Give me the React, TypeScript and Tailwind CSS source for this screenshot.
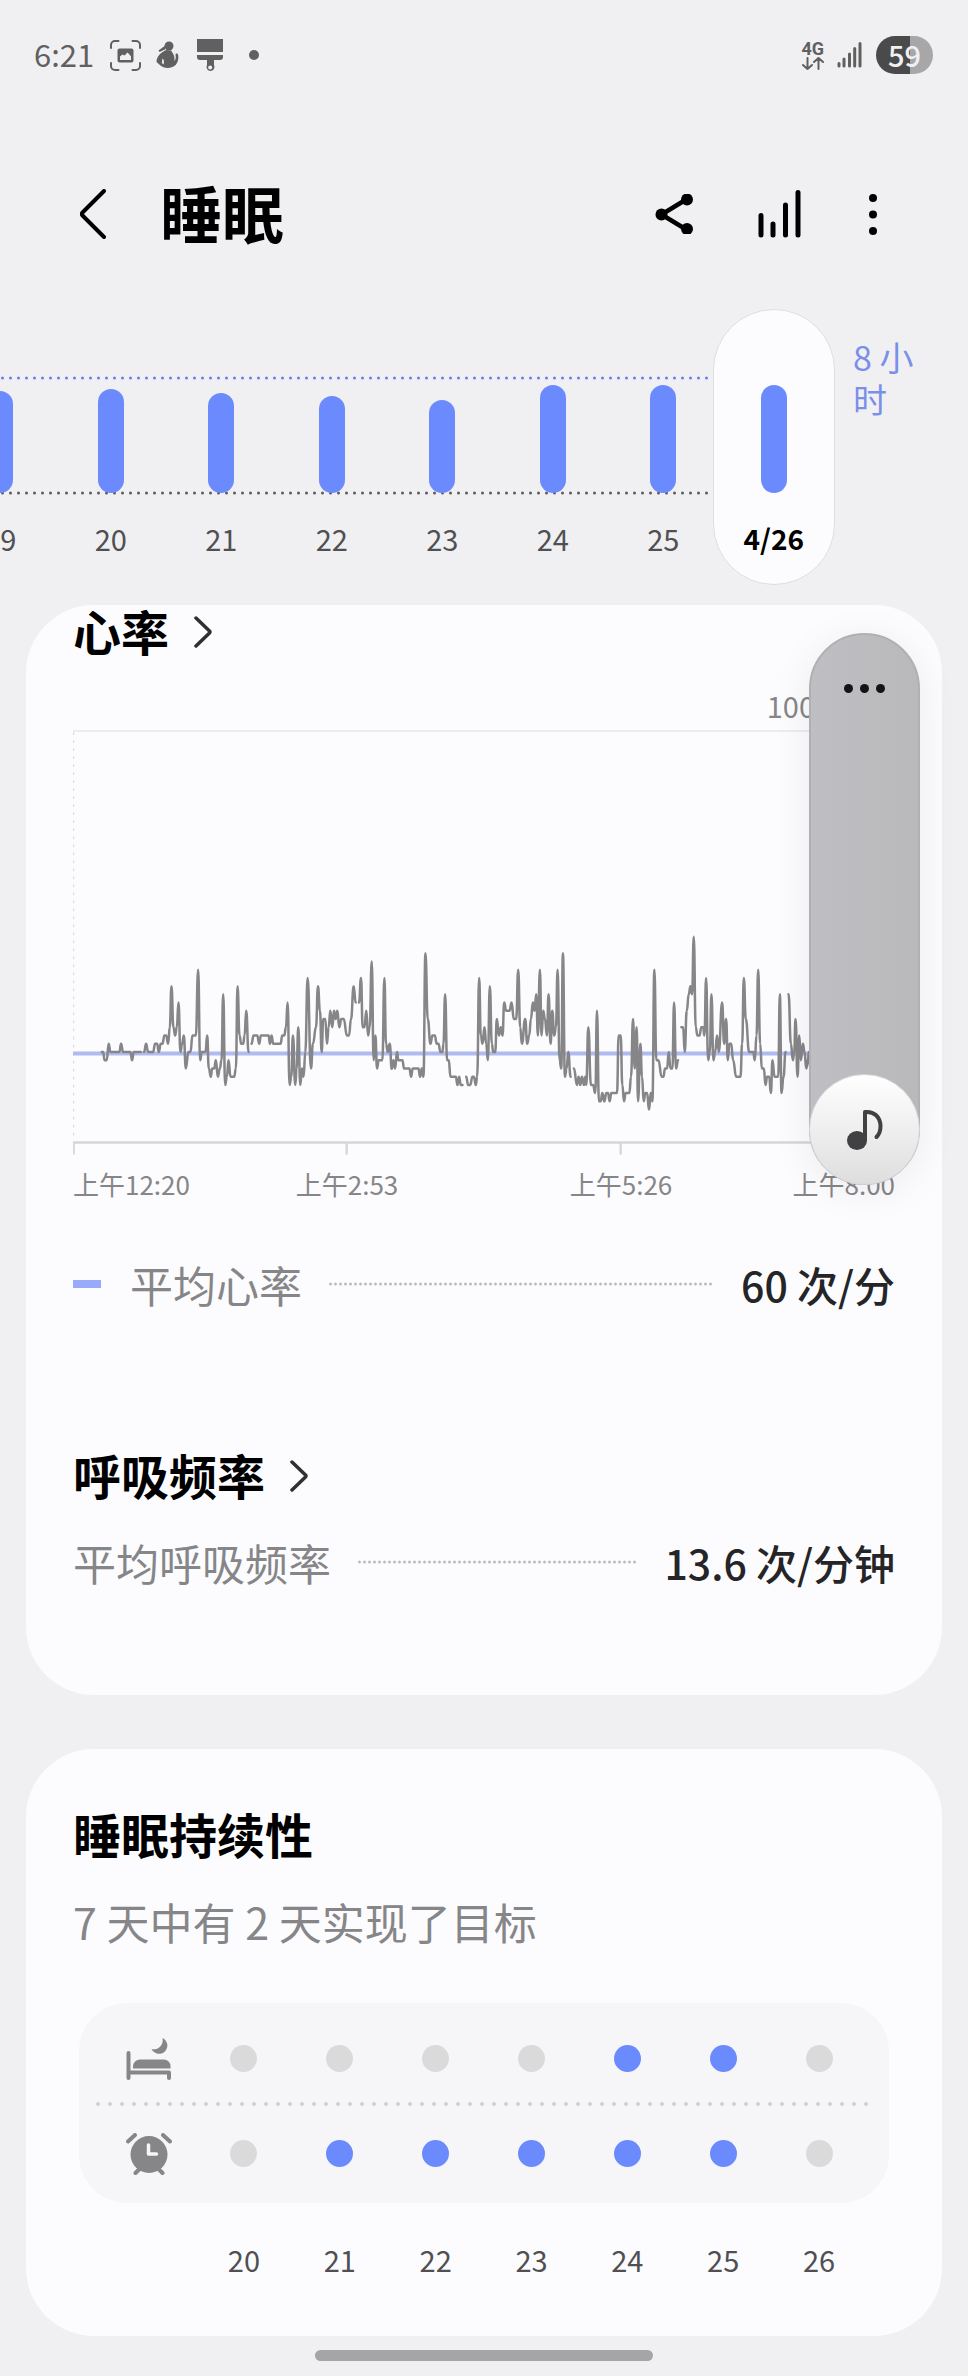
import type { ReactNode } from 'react';

type Sample = [number, number];

// Each run is a stretch of the night with continuous readings: [x, bpm]
// x is in chart units (2463 across the whole night), counted from `at`
const heartRuns: { at: number; samples: Sample[] }[] = [
  {
    at: -39,
    samples: [[125, 61], [129, 61], [134, 60], [140, 60], [146, 62], [151, 61], [178, 61], [183, 62], [189, 61], [211, 61], [216, 60], [221, 61], [242, 61]],
  },
  {
    at: -39,
    samples: [
      [252, 61], [258, 62], [264, 61], [279, 61], [285, 62], [291, 62], [296, 61], [302, 62], [307, 62], [313, 63], [318, 63], [324, 62], [329, 64], [334, 69], [340, 64], [345, 63], [350, 64], [355, 67], [361, 61], [366, 62], [371, 63], [377, 59], [385, 61], [391, 61], [397, 63], [407, 63], [414, 71], [420, 60], [425, 61], [436, 61], [441, 63], [446, 59], [452, 58], [456, 59], [462, 59], [467, 60], [473, 58], [479, 59], [484, 60], [489, 68], [495, 57], [500, 58], [505, 60], [511, 58], [522, 58], [527, 59], [532, 69], [538, 63], [543, 62], [549, 62], [553, 63], [558, 66], [565, 61],
    ],
  },
  {
    at: -39,
    samples: [
      [574, 62], [580, 63], [591, 63], [597, 62], [602, 63], [625, 63], [629, 62], [634, 63], [639, 62], [661, 62], [666, 63], [672, 63], [677, 64], [682, 67], [688, 57], [693, 58], [698, 63], [705, 57], [709, 59], [714, 64], [720, 57], [725, 59], [730, 58], [735, 61], [742, 70], [752, 59], [758, 62], [767, 64], [773, 69], [779, 66], [784, 61], [789, 65], [795, 65], [800, 62], [805, 64], [810, 66], [816, 64], [821, 66], [826, 65], [831, 66], [837, 64], [843, 65], [850, 65], [860, 63], [866, 63], [872, 65], [880, 69], [886, 67],
    ],
  },
  {
    at: -39,
    samples: [[896, 67], [902, 70], [907, 64], [912, 64], [918, 66], [923, 63], [928, 64], [934, 72], [940, 60], [945, 63], [950, 59], [955, 60], [966, 60], [972, 70], [977, 62], [982, 61], [988, 62], [994, 59]],
  },
  {
    at: 951,
    samples: [
      [4, 59], [9, 60], [14, 59], [20, 61], [24, 60], [36, 60], [41, 59], [57, 59], [62, 58], [67, 59], [84, 59], [89, 58], [94, 59], [99, 58], [105, 73], [112, 65], [120, 62], [126, 63], [133, 63], [139, 62], [144, 62], [150, 61], [156, 61], [159, 62], [164, 68], [170, 60], [175, 60], [180, 58], [196, 58], [201, 57], [206, 58], [211, 57], [216, 57],
    ],
  },
  {
    at: 951,
    samples: [
      [227, 58], [233, 57], [239, 57], [246, 58], [250, 58], [256, 57], [260, 58], [266, 70], [271, 63], [276, 62], [282, 64], [287, 62], [292, 60], [298, 69], [304, 62], [308, 61], [314, 61], [319, 65], [325, 63], [331, 64], [336, 63], [341, 67], [347, 66], [357, 66], [363, 67], [370, 65], [377, 65], [383, 71], [389, 64], [394, 62], [404, 65], [410, 62], [416, 63], [421, 65], [427, 67], [432, 66], [437, 68], [442, 63], [448, 71], [453, 63], [458, 66], [463, 65], [469, 63], [474, 68], [480, 62], [485, 66], [491, 63], [496, 64], [501, 71], [507, 60], [512, 59], [517, 73], [523, 58], [528, 59], [533, 61], [540, 58],
    ],
  },
  {
    at: 951,
    samples: [
      [550, 59], [559, 57], [564, 58], [569, 57], [574, 58], [580, 57], [584, 58], [587, 57], [593, 64], [601, 57], [607, 57], [614, 56], [619, 66], [625, 55], [630, 55], [635, 56], [641, 55], [647, 56], [652, 56], [657, 55], [662, 56], [679, 56], [684, 63], [690, 63], [695, 57], [700, 55], [705, 56], [716, 56], [721, 58], [727, 65], [732, 59], [738, 64], [742, 55], [749, 62], [754, 58], [759, 55], [764, 56], [769, 56], [775, 54], [780, 56], [785, 55], [791, 71], [797, 60], [803, 60], [813, 58], [818, 58], [823, 59], [829, 59], [834, 61], [839, 59], [845, 59], [850, 67], [856, 59], [862, 60],
    ],
  },
  {
    at: 1701,
    samples: [
      [122, 64], [127, 64], [132, 61], [138, 66], [144, 68], [149, 69], [154, 68], [159, 75], [165, 64], [170, 63], [176, 63], [182, 64], [187, 64], [191, 63], [196, 70], [202, 60], [207, 61], [212, 68], [218, 60], [223, 61], [229, 63], [234, 61], [244, 67], [250, 62], [256, 65], [261, 60], [266, 62], [271, 62], [277, 60], [286, 58], [299, 58], [304, 62], [309, 70], [315, 65], [325, 61], [337, 61], [342, 60], [347, 63], [352, 71], [358, 62], [363, 59], [369, 59], [374, 57], [379, 58], [385, 58], [390, 56], [395, 60], [401, 58], [412, 58], [417, 68], [422, 56], [428, 58], [434, 61],
    ],
  },
  {
    at: 1701,
    samples: [[443, 68], [450, 62], [456, 60], [460, 61], [464, 65], [470, 58], [475, 63], [480, 60], [486, 62], [491, 61], [496, 59], [501, 60], [504, 61], [508, 59], [520, 61], [540, 60]],
  },
];

const bpmToY = (bpm: number) => (100 - bpm) * 24.66;

const runToPath = (at: number, samples: Sample[]) => {
  let d = '';
  samples.forEach(([sx, bpm], i) => {
    const x = at + sx;
    const y = bpmToY(bpm);
    if (i === 0) {
      d = `M${x} ${y}`;
      return;
    }
    const prevX = at + samples[i - 1][0];
    const prevY = bpmToY(samples[i - 1][1]);
    const mid = (prevX + x) / 2;
    d += `C${mid} ${prevY} ${mid} ${y} ${x} ${y}`;
  });
  return d;
};

const nights = [
  { label: '19', height: 102 },
  { label: '20', height: 104 },
  { label: '21', height: 100 },
  { label: '22', height: 97 },
  { label: '23', height: 93 },
  { label: '24', height: 108 },
  { label: '25', height: 108 },
  { label: '4/26', height: 108 },
];

const week = ['20', '21', '22', '23', '24', '25', '26'];
const bedtimeMet = [false, false, false, false, true, true, false];
const wakeMet = [false, true, true, true, true, true, false];

const DottedLine = ({ id, pitch, dot, color }: { id: string; pitch: number; dot: number; color: string }) => (
  <svg className="block h-1 w-full" aria-hidden="true">
    <defs>
      <pattern id={id} width={pitch} height="4" patternUnits="userSpaceOnUse">
        <circle cx={dot / 2} cy="2" r={dot / 2} fill={color} />
      </pattern>
    </defs>
    <rect width="100%" height="4" fill={`url(#${id})`} />
  </svg>
);

const StatusBar = () => (
  <div className="flex h-[110px] items-center justify-between pr-[35px] pl-[34px] text-[#606060]">
    <div className="flex items-center">
      <span className="w-[76px] pb-[2px] text-[31px] leading-8">6:21</span>
      <svg width="31" height="31" viewBox="0 0 31 31" fill="none" aria-hidden="true">
        <path d="M1 8V5a4 4 0 0 1 4-4h3.500M22.500 1H26a4 4 0 0 1 4 4v3M30 23v3a4 4 0 0 1-4 4h-3.500M8.500 30H5a4 4 0 0 1-4-4v-3" stroke="currentColor" strokeWidth="2" strokeLinecap="round" />
        <rect x="7.500" y="8.500" width="16" height="14" rx="2" fill="currentColor" />
        <path d="M10 20v-3.500l2.500-2 2 1 3-3 1.500 1.500 2 2.500V20z" fill="#f0f0f3" />
      </svg>
      <svg className="ml-[15px]" width="24" height="28" viewBox="0 0 24 28" aria-hidden="true">
        <circle cx="13" cy="5" r="4.500" fill="currentColor" />
        <path d="M10 4 2.500 9.500l1 1.500L9 8.500z" fill="currentColor" />
        <path d="M15 9.500c2.500 3.500 4.200 6.500 3.200 10.500 1.800-1.200 1.800-3.800 1.300-6.200-.2-1.700 2.200-1.700 2.600 0C23.200 19 21 27 12 27c-4 0-5.500-1-7.500-2.500L.5 21c0-5 3.500-9 9.500-12z" fill="currentColor" />
        <path d="M6.500 17.500 5.800 22l2 1.500V19z" fill="#f0f0f3" />
      </svg>
      <svg className="ml-[17px]" width="26" height="33" viewBox="0 0 26 33" aria-hidden="true">
        <path d="M0 0h26v13H0zM0 16h26v2a3 3 0 0 1-3 3h-6v5a4 4 0 1 1-7 0v-5H3a3 3 0 0 1-3-3z" fill="currentColor" />
        <circle cx="13.200" cy="28.500" r="2" fill="#f0f0f3" />
      </svg>
      <span className="ml-[26px] size-[10px] rounded-full bg-[#606060]" />
    </div>
    <div className="flex items-center">
      <div className="flex flex-col items-center">
        <span className="font-[Roboto] text-[18px] leading-4 font-bold">4G</span>
        <svg width="22" height="13" viewBox="0 0 22 13" fill="none" stroke="currentColor" strokeWidth="2" strokeLinecap="round" strokeLinejoin="round" aria-hidden="true">
          <path d="M5.500 1v11M1 8l4.500 4L10 8M16.500 12V1M12 5l4.500-4L21 5" />
        </svg>
      </div>
      <svg className="ml-[13px]" width="25" height="28" viewBox="0 0 25 28" stroke="currentColor" strokeWidth="3" strokeLinecap="round" aria-hidden="true">
        <path d="M2 22.500V25M7 18v7M12.500 13v12M17.700 7.500V25M23 2.500V25" />
      </svg>
      <div className="ml-[14px] flex h-[38px] w-[57px] items-center justify-center rounded-full bg-linear-to-r from-[#4a4a4a] from-59% to-[#a7a7a9] to-59% pb-[2px] text-[29px] leading-8 font-medium text-[#f0f0f3]">59</div>
    </div>
  </div>
);

const Header = () => (
  <header className="flex h-[199px] items-start pr-[73px] pl-[67px] text-black">
    <button type="button" aria-label="返回" className="mt-[81px] flex h-[46px] w-[52px] items-center justify-center">
      <svg width="26" height="50" viewBox="0 0 26 50" fill="none" stroke="currentColor" strokeWidth="4" strokeLinecap="round" strokeLinejoin="round" aria-hidden="true">
        <path d="M24 2 2.500 23.500a2 2 0 0 0 0 3L24 48" />
      </svg>
    </button>
    <h1 className="mt-[71px] ml-[41px] flex-1 text-[62px] leading-[62px] font-bold">睡眠</h1>
    <button type="button" aria-label="分享" className="mt-[84px] size-10">
      <svg width="40" height="40" viewBox="0 0 40 40" aria-hidden="true">
        <path d="M33 5 7.500 20.500 33 36" fill="none" stroke="currentColor" strokeWidth="4.500" />
        <circle cx="7.500" cy="20.500" r="6" fill="currentColor" />
        <circle cx="33" cy="5.500" r="6" fill="currentColor" />
        <circle cx="33" cy="35" r="6" fill="currentColor" />
      </svg>
    </button>
    <button type="button" aria-label="统计" className="mt-[79px] ml-[62px] h-[50px] w-[48px]">
      <svg width="48" height="50" viewBox="0 0 48 50" stroke="currentColor" strokeWidth="5" strokeLinecap="round" aria-hidden="true">
        <path d="M5 26.500V46M17 35v11M29.500 16v30M42 3.500V46" />
      </svg>
    </button>
    <button type="button" aria-label="更多" className="mt-[84px] ml-[48px] h-[42px] w-[43px]">
      <svg width="43" height="42" viewBox="0 0 43 42" fill="currentColor" aria-hidden="true">
        <circle cx="21" cy="4" r="4" />
        <circle cx="21" cy="20.500" r="4" />
        <circle cx="21" cy="37" r="4" />
      </svg>
    </button>
  </header>
);

const NightStrip = () => (
  <section className="flex h-[296px] overflow-hidden">
    <div className="relative -ml-[55px] flex-1">
      <div className="absolute inset-x-0 top-[67px]">
        <DottedLine id="goal-dots" pitch={8} dot={3} color="#6a7de8" />
      </div>
      <div className="absolute inset-x-0 top-[182px]">
        <DottedLine id="base-dots" pitch={8} dot={3} color="#5c5c5e" />
      </div>
      <div className="relative grid grid-cols-8">
        {nights.map((night) => {
          const selected = night.label === '4/26';
          return (
            <button
              key={night.label}
              type="button"
              className={
                selected
                  ? '-mx-[6px] flex h-[276px] flex-col items-center rounded-full border border-[#dedee1] bg-[#fcfcff] text-[28px] font-bold text-black'
                  : 'flex h-[276px] flex-col items-center border border-transparent text-[29px] text-[#505052]'
              }
            >
              <span className="flex h-[183px] items-end">
                <span className="block w-[26px] rounded-full bg-[#6b8afe]" style={{ height: night.height }} />
              </span>
              <span className="mt-[25px] leading-10">{night.label}</span>
            </button>
          );
        })}
      </div>
    </div>
    <p className="w-[139px] pt-[27px] pr-[50px] pl-[24px] text-[34px] leading-[42px] text-[#7a90e8]">8 小时</p>
  </section>
);

const SectionLink = ({ children }: { children: ReactNode }) => (
  <a href="#" className="flex items-center text-black">
    <h2 className="text-[48px] leading-[50px] font-bold">{children}</h2>
    <svg className="mt-1 ml-6" width="20" height="32" viewBox="0 0 20 32" fill="none" stroke="#303032" strokeWidth="3.500" strokeLinecap="round" strokeLinejoin="round" aria-hidden="true">
      <path d="M3 2l13.500 13a1.500 1.500 0 0 1 0 2L3 30" />
    </svg>
  </a>
);

const Metric = ({ id, label, value, marker }: { id: string; label: string; value: string; marker?: boolean }) => (
  <div className="flex items-center leading-[60px]">
    {marker && <span className="mr-[29px] h-2 w-7 bg-[#99aafb]" />}
    <span className="text-[43px] text-[#868688]">{label}</span>
    <span className="mx-[27px] flex-1">
      <DottedLine id={id} pitch={5} dot={3} color="#bcbcbe" />
    </span>
    <span className="text-[41px] font-medium text-[#252527]">{value}</span>
  </div>
);

const HeartChart = () => (
  <div>
    <p className="pr-[80px] text-right text-[29px] leading-10 text-[#868688]">100</p>
    <svg className="mt-[5px] block w-full" viewBox="0 0 2463 1272" fill="none" role="img" aria-label="心率">
      <path d="M0 3H2463" stroke="#ececef" strokeWidth="6" />
      <path d="M2 6V1230" stroke="#d8d8da" strokeWidth="3" strokeDasharray="9 15" />
      <path d="M0 969H2463" stroke="#b0bcf1" strokeWidth="12" />
      <g transform="translate(0 3)" stroke="#868688" strokeWidth="7.500" strokeLinecap="round" strokeLinejoin="round">
        {heartRuns.map((run, i) => (
          <path key={i} d={runToPath(run.at, run.samples)} />
        ))}
      </g>
      <path d="M0 1236H2463" stroke="#d6d6d8" strokeWidth="7" />
      <path d="M2 1236v36M820 1236v36M1641 1236v36M2461 1236v36" stroke="#d6d6d8" strokeWidth="7" />
    </svg>
    <div className="mt-[9px] grid grid-cols-[1fr_2fr_2fr_1fr] text-[26px] leading-10 whitespace-nowrap text-[#868688]">
      <span>上午12:20</span>
      <span className="text-center">上午2:53</span>
      <span className="text-center">上午5:26</span>
      <span className="text-right">上午8:00</span>
    </div>
  </div>
);

const MusicDock = () => (
  <div className="absolute top-[28px] right-[22px] flex h-[552px] w-[111px] flex-col items-center justify-between rounded-full border-2 border-[#b0b0b2] bg-linear-to-r from-[#bfbec3] to-[#b9b9bb] shadow-[0_6px_40px_rgba(0,0,0,0.07)]">
    <button type="button" aria-label="更多选项" className="flex h-[106px] w-full items-center justify-center gap-[7px]">
      <span className="size-[9px] rounded-full bg-[#141416]" />
      <span className="size-[9px] rounded-full bg-[#141416]" />
      <span className="size-[9px] rounded-full bg-[#141416]" />
    </button>
    <button type="button" aria-label="音乐" className="-mb-[2px] flex size-[111px] items-center justify-center rounded-full border border-[#d8d8da] bg-linear-to-b from-white to-[#dededf]">
      <svg width="36" height="42" viewBox="0 0 36 42" fill="none" aria-hidden="true">
        <ellipse cx="10" cy="31.500" rx="10" ry="9.500" fill="#414143" />
        <path d="M18 31V3c9-1 15.500 5 15.500 14.500 0 4.500-1.500 8-4 10.500" stroke="#414143" strokeWidth="4" strokeLinecap="round" strokeLinejoin="round" />
      </svg>
    </button>
  </div>
);

const GoalRow = ({ icon, met }: { icon: ReactNode; met: boolean[] }) => (
  <div className="flex h-[86px] items-center pr-[22px]">
    <div className="flex w-[117px] justify-center pl-[22px]">{icon}</div>
    <div className="grid flex-1 grid-cols-7 justify-items-center">
      {met.map((ok, i) => (
        <span key={i} className={ok ? 'size-[27px] rounded-full bg-[#6b8afe]' : 'size-[27px] rounded-full bg-[#dadadb]'} />
      ))}
    </div>
  </div>
);

const BedIcon = () => (
  <svg width="46" height="42" viewBox="0 0 46 42" aria-hidden="true">
    <path d="M2.500 15v25M2.500 34.500H43V40" fill="none" stroke="#868688" strokeWidth="4" strokeLinecap="round" strokeLinejoin="round" />
    <path d="M7 30.500v-2a7 7 0 0 1 7-7h24a6.500 6.500 0 0 1 6.500 6.500v2.500z" fill="#868688" />
    <path d="M36.500 0a8.300 8.300 0 1 1-11 11c6 1.500 12.500-3.500 11-11z" fill="#868688" />
  </svg>
);

const AlarmIcon = () => (
  <svg width="46" height="42" viewBox="0 0 46 42" fill="none" strokeLinecap="round" aria-hidden="true">
    <path d="M2 8.500l7-6.500M44 8.500l-7-6.500M9.500 40l4-4M36.500 40l-4-4" stroke="#868688" strokeWidth="4" />
    <circle cx="23" cy="21.500" r="18.500" fill="#868688" />
    <path d="M22.500 12v9h8" stroke="#f6f6f9" strokeWidth="3.500" strokeLinejoin="round" />
  </svg>
);

const App = () => {
  return (
    <div className="min-h-screen bg-[#f0f0f3] font-['Noto_Sans_CJK_SC',sans-serif] font-normal">
      <StatusBar />
      <Header />
      <NightStrip />

      <main className="px-[26px]">
        <section className="relative rounded-[68px] bg-[#fcfcff] px-[47px] pb-[103px]">
          <SectionLink>心率</SectionLink>
          <div className="mt-[30px]">
            <HeartChart />
          </div>
          <div className="mt-[50px]">
            <Metric id="heart-dots" label="平均心率" value="60 次/分" marker />
          </div>
          <div className="mt-[135px]">
            <SectionLink>呼吸频率</SectionLink>
          </div>
          <div className="mt-[33px]">
            <Metric id="breath-dots" label="平均呼吸频率" value="13.6 次/分钟" />
          </div>
          <MusicDock />
        </section>

        <section className="mt-[54px] rounded-[68px] bg-[#fcfcff] pt-[59px] pb-[57px]">
          <h2 className="px-[47px] text-[48px] leading-[50px] font-bold text-black">睡眠持续性</h2>
          <p className="mt-[33px] px-[47px] text-[43px] leading-[60px] text-[#868688]">7 天中有 2 天实现了目标</p>
          <div className="mx-[53px] mt-[52px] h-[200px] rounded-[48px] bg-[#f6f6f9] pt-[13px]">
            <GoalRow icon={<BedIcon />} met={bedtimeMet} />
            <div className="mr-5 mb-[5px] ml-[17px]">
              <DottedLine id="goal-row-dots" pitch={12} dot={4} color="#d0d0d2" />
            </div>
            <GoalRow icon={<AlarmIcon />} met={wakeMet} />
          </div>
          <div className="mx-[53px] mt-[36px] grid grid-cols-7 pr-[22px] pl-[117px] text-center text-[29px] leading-10 text-[#505052]">
            {week.map((day) => (
              <span key={day}>{day}</span>
            ))}
          </div>
        </section>
      </main>

      <div className="mx-auto mt-[14px] h-[11px] w-[35%] rounded-full bg-[#a5a5a8]" />
    </div>
  );
};

export default App;
